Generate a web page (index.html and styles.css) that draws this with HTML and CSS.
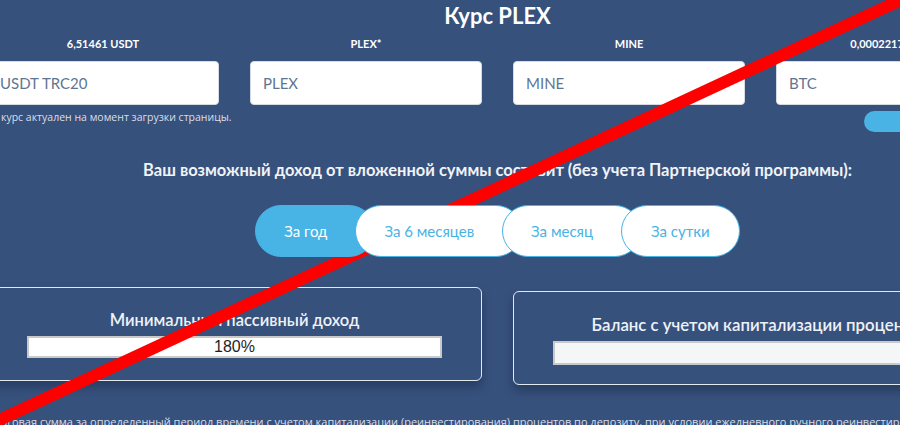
FILE: index.html
```html
<!DOCTYPE html>
<html lang="ru">
<head>
<meta charset="utf-8">
<title>Курс PLEX</title>
<link rel="stylesheet" href="styles.css">
</head>
<body>
<div class="page">
  <h1 class="title">Курс PLEX</h1>
  <div class="rates">
    <div class="rate">
      <div class="rate-label">6,51461 USDT</div>
      <div class="field">USDT TRC20</div>
    </div>
    <div class="rate">
      <div class="rate-label">PLEX*</div>
      <div class="field">PLEX</div>
    </div>
    <div class="rate">
      <div class="rate-label">MINE</div>
      <div class="field">MINE</div>
    </div>
    <div class="rate">
      <div class="rate-label">0,00022176 BTC</div>
      <div class="field">BTC</div>
    </div>
    <div class="note">курс актуален на момент загрузки страницы.</div>
    <div class="refresh"></div>
  </div>

  <h2 class="income-title">Ваш возможный доход от вложенной суммы составит (без учета Партнерской программы):</h2>

  <div class="tabs">
    <div class="tab tab-active">За год</div>
    <div class="tab">За 6 месяцев</div>
    <div class="tab">За месяц</div>
    <div class="tab tab-last">За сутки</div>
  </div>

  <div class="cards">
    <div class="card">
      <div class="card-title">Минимальный пассивный доход</div>
      <div class="bar">180%</div>
    </div>
    <div class="card card-second">
      <div class="card-title">Баланс с учетом капитализации процентов</div>
      <div class="bar bar-empty"></div>
    </div>
  </div>

  <p class="footnote">Итоговая сумма за определенный период времени с учетом капитализации (реинвестирования) процентов по депозиту, при условии ежедневного ручного реинвестирования.</p>
</div>

<svg class="strike" width="900" height="425" viewBox="0 0 900 425">
  <line x1="-20" y1="429" x2="920" y2="-9" stroke="#ff0000" stroke-width="12"/>
</svg>
</body>
</html>
```

FILE: styles.css
```css
html, body {
  margin: 0;
  padding: 0;
}
body {
  width: 900px;
  height: 425px;
  overflow: hidden;
  background: #37517d;
  font-family: "Lato", "Open Sans", sans-serif;
  color: #ffffff;
  position: relative;
}
.page {
  width: 1021px;
  margin-left: -13px;
}
.title {
  margin: 0;
  padding-top: 1px;
  height: 33px;
  font-size: 22px;
  line-height: 30px;
  font-weight: 700;
  text-align: center;
}
.rates {
  display: grid;
  grid-template-columns: repeat(4, 232px);
  column-gap: 31px;
}
.rate-label {
  font-size: 11px;
  font-weight: 700;
  line-height: 20px;
  height: 21px;
  text-align: center;
}
.field {
  margin-top: 6px;
  height: 44px;
  box-sizing: border-box;
  background: #ffffff;
  border: 1px solid #d6dbe2;
  border-radius: 4px;
  padding-left: 12px;
  font-size: 15px;
  line-height: 42px;
  color: #5f7591;
}
.note {
  grid-column: 1 / 4;
  padding-left: 14px;
  margin-top: 5px;
  font-family: "Open Sans", sans-serif;
  font-size: 10.5px;
  line-height: 14px;
  color: #d9dfe9;
}
.refresh {
  grid-column: 4;
  justify-self: end;
  margin-top: 6px;
  width: 144px;
  height: 21px;
  border-radius: 11px;
  background: #4ab3e5;
}
.income-title {
  margin: 27px 0 0;
  font-size: 16.5px;
  font-weight: 700;
  line-height: 22px;
  text-align: center;
  color: #f0f3f8;
}
.tabs {
  display: flex;
  justify-content: center;
  margin-top: 24px;
  height: 52px;
}
.tab {
  position: relative;
  box-sizing: border-box;
  height: 52px;
  padding: 0 47px 0 28px;
  margin-right: -20px;
  border: 1px solid #48b3e5;
  border-radius: 26px;
  background: #ffffff;
  color: #48b3e5;
  font-size: 15px;
  line-height: 50px;
}
.tab:nth-child(1) { z-index: 1; }
.tab:nth-child(2) { z-index: 2; }
.tab:nth-child(3) { z-index: 3; }
.tab:nth-child(4) { z-index: 4; }
.tab-active {
  background: #48b3e5;
  color: #ffffff;
}
.tab-last {
  margin-right: 0;
  padding: 0 29px;
}
.cards {
  display: grid;
  grid-template-columns: 495px 495px;
  column-gap: 31px;
  margin-top: 30px;
  align-items: start;
}
.card {
  box-sizing: border-box;
  height: 94px;
  border: 1px solid #e3e8ef;
  border-radius: 6px;
  box-shadow: 0 6px 10px rgba(10, 25, 50, 0.35);
  padding: 22px 39px 0;
}
.card-second {
  margin-top: 4px;
  padding-top: 23px;
}
.card-title {
  font-size: 16.5px;
  font-weight: 600;
  line-height: 20px;
  text-align: center;
  color: #eef2f8;
}
.card-second .card-title {
  font-size: 16.8px;
}
.bar {
  margin-top: 6px;
  height: 22px;
  box-sizing: border-box;
  border: 2px solid #c9c9c9;
  background: #ffffff;
  font-family: "Liberation Sans", Arial, sans-serif;
  font-size: 16px;
  line-height: 18px;
  text-align: center;
  color: #1e1e1e;
}
.bar-empty {
  height: 24px;
  background: #f5f6f8;
}
.footnote {
  margin: 29px 0 0;
  font-family: "Open Sans", sans-serif;
  font-size: 11px;
  line-height: 16px;
  color: #d9dfe9;
  white-space: nowrap;
}
.strike {
  position: absolute;
  left: 0;
  top: 0;
  pointer-events: none;
}
```
